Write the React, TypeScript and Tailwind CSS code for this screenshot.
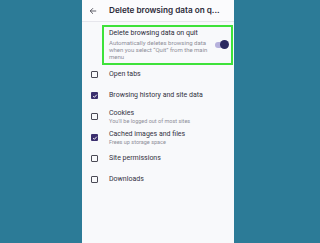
import React from 'react'

// Firefox Android: settings page for deleting browsing data on quit

type Row = { label: string; sub?: string; checked: boolean }

const ROWS: Row[] = [
  { label: 'Open tabs', checked: false },
  { label: 'Browsing history and site data', checked: true },
  { label: 'Cookies', sub: "You'll be logged out of most sites", checked: false },
  { label: 'Cached images and files', sub: 'Frees up storage space', checked: true },
  { label: 'Site permissions', checked: false },
  { label: 'Downloads', checked: false },
]

function Checkbox({ checked }: { checked: boolean }) {
  if (checked) {
    return (
      <div className="w-[7px] h-[7px] rounded-[1px] bg-[#3b2f6e] flex items-center justify-center">
        <svg width="6" height="6" viewBox="0 0 10 10">
          <path d="M2 5.2l2 2 4-4.4" fill="none" stroke="#fff" strokeWidth="1.6" />
        </svg>
      </div>
    )
  }
  return <div className="w-[7px] h-[7px] rounded-[1px] border-[1.2px] border-[#4a4a55]" />
}

export default function App() {
  return (
    <div
      className="w-[320px] h-[243px] bg-[#2c7b97] flex overflow-hidden"
      style={{ fontFamily: 'Roboto, "Liberation Sans", sans-serif' }}
    >
      <div className="ml-[82px] w-[152px] h-full bg-[#f8f9fb] flex flex-col">
        {/* header */}
        <div className="h-[22px] flex items-center bg-[#fbfbfd] border-b border-[#e6e6ec] shrink-0">
          <svg width="8" height="8" viewBox="0 0 10 10" className="ml-[7px] shrink-0">
            <path d="M9 5H1.5M5 1.5L1.5 5 5 8.5" fill="none" stroke="#3a3a44" strokeWidth="1" />
          </svg>
          <span
            className="ml-[12px] text-[8.2px] font-semibold text-[#2b2a38] whitespace-nowrap"
            style={{ fontFamily: 'Inter, "Noto Sans", sans-serif' }}
          >
            Delete browsing data on q...
          </span>
        </div>

        {/* highlighted toggle row */}
        <div className="ml-[20px] mt-[3px] w-[131px] h-[40px] border-2 border-[#3ee23a] flex items-start shrink-0">
          <div className="pl-[5px] pt-[2px] flex-1 leading-none">
            <div className="text-[7px] text-[#2b2a38] leading-[9px]">Delete browsing data on quit</div>
            <div className="text-[6px] text-[#8e8e99] leading-[7px] mt-[1px] w-[100px]">
              Automatically deletes browsing data when you select “Quit” from the main menu
            </div>
          </div>
          <div className="relative w-[13px] h-[6px] rounded-full bg-[#b6b1dc] mt-[15px] mr-[3px]">
            <div className="absolute right-[-1px] top-[-2px] w-[9px] h-[9px] rounded-full bg-[#2a2860]" />
          </div>
        </div>

        {/* checkbox rows */}
        <div className="-mt-px flex flex-col">
          {ROWS.map((r) => (
            <div key={r.label} className="h-[21px] flex items-center">
              <div className="w-[27px] flex justify-start pl-[9px]">
                <Checkbox checked={r.checked} />
              </div>
              <div className="leading-none">
                <div className="text-[7px] text-[#33323f] leading-[9px]">{r.label}</div>
                {r.sub && <div className="text-[5.5px] text-[#8e8e99] leading-[7px]">{r.sub}</div>}
              </div>
            </div>
          ))}
        </div>
      </div>
    </div>
  )
}
